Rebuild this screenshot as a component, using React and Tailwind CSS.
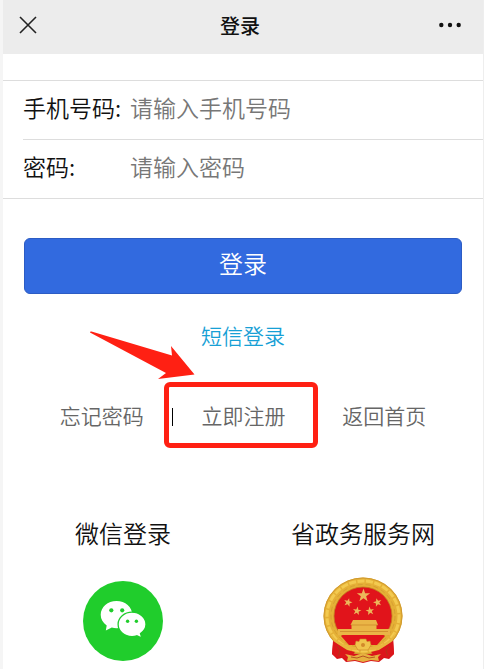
import React from "react";

const star = (cx, cy, r, turn = 0) =>
  Array.from({ length: 10 }, (_, i) => {
    const radius = i % 2 ? r * 0.4 : r;
    const angle = ((i * 36 - 90 + turn) * Math.PI) / 180;
    return `${(cx + radius * Math.cos(angle)).toFixed(2)},${(cy + radius * Math.sin(angle)).toFixed(2)}`;
  }).join(" ");

function CloseIcon() {
  return (
    <svg viewBox="0 0 18 18" className="h-[18px] w-[18px]" fill="none" stroke="#222" strokeWidth="1.6" aria-hidden="true">
      <path d="M1 1 17 17M17 1 1 17" />
    </svg>
  );
}

function MoreIcon() {
  return (
    <svg viewBox="0 0 22 6" className="h-[6px] w-[22px]" fill="#111" aria-hidden="true">
      <circle cx="2.3" cy="3" r="2.2" />
      <circle cx="11" cy="3" r="2.2" />
      <circle cx="19.7" cy="3" r="2.2" />
    </svg>
  );
}

function WechatIcon() {
  return (
    <svg viewBox="0 0 80 80" className="h-20 w-20" aria-hidden="true">
      <circle cx="40" cy="40" r="40" fill="#20cd2c" />
      <path
        fill="#fff"
        d="M33.5 20C24.7 20 17.7 26.2 17.7 33.7c0 4.3 2.3 8.2 6 10.8L22.800 49.500l6-2.900c1.500.4 3.100.6 4.700.6 8.800 0 15.800-6 15.800-13.500S42.300 20 33.500 20Z"
      />
      <path
        fill="#fff"
        stroke="#20cd2c"
        strokeWidth="1.3"
        d="M49 31.200c-7.700 0-13.900 5.400-13.900 12.100S41.300 55.600 49 55.600c1.700 0 3.300-.3 4.800-.8l5.100 2.400-1.400-4.700c3.300-2.200 5.500-5.500 5.500-9.200 0-6.700-6.300-12.100-14-12.100Z"
      />
      <g fill="#20cd2c">
        <circle cx="28.3" cy="29.3" r="2.1" />
        <circle cx="39.2" cy="29.3" r="2.1" />
        <circle cx="44.6" cy="40.3" r="1.7" />
        <circle cx="53.4" cy="40.3" r="1.7" />
      </g>
    </svg>
  );
}

function EmblemIcon() {
  return (
    <svg viewBox="0 0 80 86" className="h-[86px] w-20" aria-hidden="true">
      <path d="M11 58 9 77l5 5 5-1 4 4 9-1 8 2 8-2 8 1 5-4 5 1 5-5-1-19Z" fill="#d8151b" />
      <ellipse cx="40" cy="39" rx="39.500" ry="38.500" fill="#e5b036" />
      <ellipse cx="40" cy="39" rx="39" ry="38" fill="none" stroke="#d09a30" strokeWidth="1" />
      <ellipse cx="40" cy="39" rx="36" ry="35" fill="none" stroke="#f3ca50" strokeWidth="3" strokeDasharray="7 1.5" />
      <ellipse cx="40" cy="39" rx="32" ry="31.500" fill="none" stroke="#d69f33" strokeWidth="1" strokeDasharray="5 3" />
      <circle cx="40" cy="39" r="29" fill="#e1141b" stroke="#c17a22" strokeWidth=".8" />
      <g fill="#ecb75a">
        <polygon points={star(40.5, 18.5, 7)} />
        <polygon points={star(25, 25.5, 4.5, 15)} />
        <polygon points={star(54.5, 25.5, 4.5, -15)} />
        <polygon points={star(34, 34, 4.5, 10)} />
        <polygon points={star(47, 34, 4.5, -10)} />
      </g>
      <path d="M30 43h23l2 5H27.5ZM28.5 48h25v4h-25ZM15 52h52v6H15Z" fill="#eab546" />
      <path d="M28 48h27M17 54.5h48" stroke="#c98126" strokeWidth=".7" />
      <path d="M18 59h44l-8 9H26Z" fill="#e1141b" />
      <path d="M7 54c5 11 15 15 25 16h16c10-1 20-5 25-16l-4 10c-5 6-12 9-21 9H32c-9 0-16-3-21-9Z" fill="#e8b63e" />
      <path d="m32 68 1-4 3 .5 1-2.5h6l1 2.5 3-.5 1 4-3 5H35Z" fill="#f0c44c" stroke="#c98126" strokeWidth=".6" />
      <circle cx="40" cy="68" r="2" fill="#d18a2a" />
      <path d="m10 64 14 9 8 2-6 6-13-1-4-3ZM70 64l-14 9-8 2 6 6 13-1 4-3Z" fill="#dc161b" />
      <path d="m22 77 9 2 9-3 9 3 9-2-3 3 1 4-8-1-8 2-8-2-8 1 1-4Z" fill="#e6b13f" />
      <path d="m28 80 6 1 6-2 6 2 6-1M14 69l3 5-2 5M66 69l-3 5 2 5" fill="none" stroke="#a93c18" strokeWidth=".8" />
    </svg>
  );
}

function Field({ id, label, type, placeholder }) {
  return (
    <div className="flex h-[58px] items-center pb-1.5 text-[23px] leading-8">
      <label htmlFor={id} className="w-[107px] shrink-0 whitespace-nowrap text-[#111]">{label}</label>
      <input
        id={id}
        type={type}
        placeholder={placeholder}
        className="h-8 min-w-0 flex-1 bg-transparent outline-none placeholder:text-[#777]"
      />
    </div>
  );
}

function RegisterMarker() {
  return (
    <span aria-hidden="true" className="pointer-events-none absolute -top-[17px] -right-1 -bottom-[17px] -left-2 rounded-md border-5 border-[#ff2013]">
      <svg viewBox="0 0 106 49" className="absolute -top-14 -left-20 h-[49px] w-[106px]" fill="#ff2013">
        <path d="M1 1.500Q1 0 2.500.500L83 24.500 82 15l23.500 28.500L69 48l8-6Z" />
      </svg>
    </span>
  );
}

export default function App() {
  return (
    <div className="min-h-screen border-r border-l-3 border-r-[#eee] border-l-[#f5f5f5] bg-white font-['Noto_Sans_CJK_SC',sans-serif] font-[350]">
      <header className="flex h-[54px] items-center justify-between bg-[#ececec] pr-[22px] pl-4">
        <button type="button" aria-label="关闭" className="flex w-[22px] items-center pb-1"><CloseIcon /></button>
        <h1 className="pb-0.5 text-xl font-medium text-[#111]">登录</h1>
        <button type="button" aria-label="更多" className="flex pb-1"><MoreIcon /></button>
      </header>

      <main className="pt-[26px]">
        <form onSubmit={(event) => event.preventDefault()}>
          <div className="border-y border-[#ddd] pl-5">
            <Field id="phone" label="手机号码:" type="tel" placeholder="请输入手机号码" />
            <div className="border-t border-[#ddd]">
              <Field id="password" label="密码:" type="password" placeholder="请输入密码" />
            </div>
          </div>
          <div className="px-[21px] pt-[39px]">
            <button type="submit" className="block h-14 w-full rounded-md border border-[#2c5cc4] bg-[#326adf] pb-1.5 text-2xl text-white">登录</button>
          </div>
        </form>

        <div className="pt-[25px] text-center">
          <a href="#sms" className="inline-block text-[21px] leading-8 text-[#17a0d5]">短信登录</a>
        </div>

        <nav className="mt-12 grid grid-cols-3 items-center px-7 text-center text-[21px] leading-8 text-[#666]">
          <a href="#forgot">忘记密码</a>
          <div className="relative flex items-center">
            <span className="mt-1 h-[18px] w-px bg-black" />
            <a href="#register" className="flex-1">立即注册</a>
            <RegisterMarker />
          </div>
          <a href="#home">返回首页</a>
        </nav>

        <section className="grid grid-cols-2 pt-[84px] text-2xl leading-9 text-[#111]">
          <a href="#wechat" className="flex flex-col items-center gap-[30px]">
            <span>微信登录</span>
            <WechatIcon />
          </a>
          <a href="#government" className="flex flex-col items-center gap-[26px]">
            <span>省政务服务网</span>
            <EmblemIcon />
          </a>
        </section>
      </main>
    </div>
  );
}
